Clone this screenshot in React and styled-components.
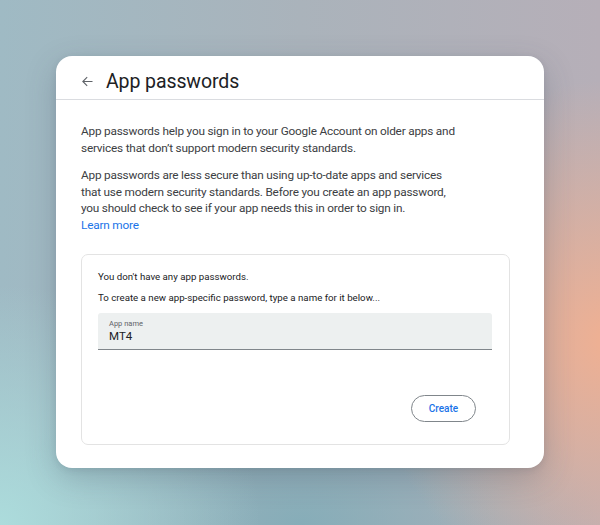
import React from 'react'
import styled, { createGlobalStyle } from 'styled-components'

const GlobalStyle = createGlobalStyle`
	html, body {
		margin: 0;
		padding: 0;
	}
	body {
		width: 600px;
		height: 525px;
		overflow: hidden;
		font-family: Roboto, 'Liberation Sans', sans-serif;
		-webkit-font-smoothing: antialiased;
	}
`

const Backdrop = styled.div`
	width: 600px;
	height: 525px;
	box-sizing: border-box;
	padding-top: 56px;
	display: flex;
	justify-content: center;
	align-items: flex-start;
	background:
		radial-gradient(ellipse 240px 260px at 610px 340px, rgba(240, 176, 146, 1), rgba(240, 176, 146, 0) 100%),
		radial-gradient(ellipse 260px 240px at 0px 525px, rgba(172, 220, 220, 1), rgba(172, 220, 220, 0) 100%),
		radial-gradient(ellipse 300px 190px at 300px 525px, rgba(128, 172, 184, 0.85), rgba(128, 172, 184, 0) 100%),
		linear-gradient(90deg, #9fbac4 0%, #aab3bb 50%, #b6afb8 100%);
`

const Card = styled.div`
	width: 488px;
	height: 412px;
	background: #ffffff;
	border-radius: 16px;
	box-shadow: 0 10px 30px rgba(60, 70, 90, 0.25), 0 2px 6px rgba(60, 70, 90, 0.12);
	display: flex;
	flex-direction: column;
	overflow: hidden;
`

const Header = styled.div`
	height: 44px;
	display: flex;
	align-items: center;
	padding: 7px 0 0 24px;
	border-bottom: 1px solid #dadce0;
	box-sizing: border-box;
	flex-shrink: 0;
`

const BackIcon = styled.svg`
	width: 15px;
	height: 15px;
	margin-right: 11px;
	color: #5f6368;
`

const Title = styled.h1`
	margin: 0;
	font-size: 19.5px;
	font-weight: 400;
	color: #202124;
	letter-spacing: -0.1px;
`

const Body = styled.div`
	padding: 23px 34px 0 25px;
	display: flex;
	flex-direction: column;
`

const Para = styled.p`
	margin: 0 0 11px;
	font-size: 11.8px;
	line-height: 16.5px;
	color: #3c4043;
	letter-spacing: -0.2px;
	white-space: nowrap;
`

const LearnMore = styled.a`
	font-size: 11.8px;
	line-height: 16.5px;
	letter-spacing: -0.2px;
	color: #1a73e8;
	text-decoration: none;
	margin-top: -11px;
	align-self: flex-start;
`

const Panel = styled.div`
	margin-top: 21px;
	height: 191px;
	border: 1px solid #e3e3e3;
	border-radius: 7px;
	box-sizing: border-box;
	padding: 15px 17px 0 16px;
	display: flex;
	flex-direction: column;
`

const Note = styled.div`
	font-size: 9.7px;
	line-height: 14px;
	color: #202124;
	margin-bottom: ${(p) => p.$gap || 0}px;
`

const Field = styled.div`
	margin-top: 8px;
	height: 37px;
	background: #edf0f0;
	border-bottom: 1.5px solid #80868b;
	border-radius: 3px 3px 0 0;
	padding: 6px 11px 0;
	box-sizing: border-box;
	display: flex;
	flex-direction: column;
`

const FieldLabel = styled.span`
	font-size: 7.5px;
	line-height: 10px;
	color: #5f6368;
`

const FieldValue = styled.span`
	font-size: 11.5px;
	line-height: 15px;
	color: #202124;
`

const Actions = styled.div`
	display: flex;
	justify-content: flex-end;
	margin-top: 45px;
	padding-right: 16px;
`

const Button = styled.button`
	width: 65px;
	height: 27px;
	border: 1px solid #80868b;
	border-radius: 14px;
	background: #ffffff;
	color: #1a73e8;
	font-family: Roboto, 'Liberation Sans', sans-serif;
	font-size: 10px;
	font-weight: 500;
	padding: 0;
`

export default function App() {
	return (
		<>
			<GlobalStyle />
			<Backdrop>
				<Card>
					<Header>
						<BackIcon viewBox="0 0 24 24" fill="none" stroke="currentColor" strokeWidth="1.7">
							<path d="M20 12H4.5M11.5 5l-7 7 7 7" />
						</BackIcon>
						<Title>App passwords</Title>
					</Header>
					<Body>
						<Para>
							App passwords help you sign in to your Google Account on older apps and
							<br />
							services that don’t support modern security standards.
						</Para>
						<Para>
							App passwords are less secure than using up-to-date apps and services
							<br />
							that use modern security standards. Before you create an app password,
							<br />
							you should check to see if your app needs this in order to sign in.
						</Para>
						<LearnMore href="#">Learn more</LearnMore>
						<Panel>
							<Note $gap={7}>You don't have any app passwords.</Note>
							<Note>To create a new app-specific password, type a name for it below...</Note>
							<Field>
								<FieldLabel>App name</FieldLabel>
								<FieldValue>MT4</FieldValue>
							</Field>
							<Actions>
								<Button>Create</Button>
							</Actions>
						</Panel>
					</Body>
				</Card>
			</Backdrop>
		</>
	)
}
